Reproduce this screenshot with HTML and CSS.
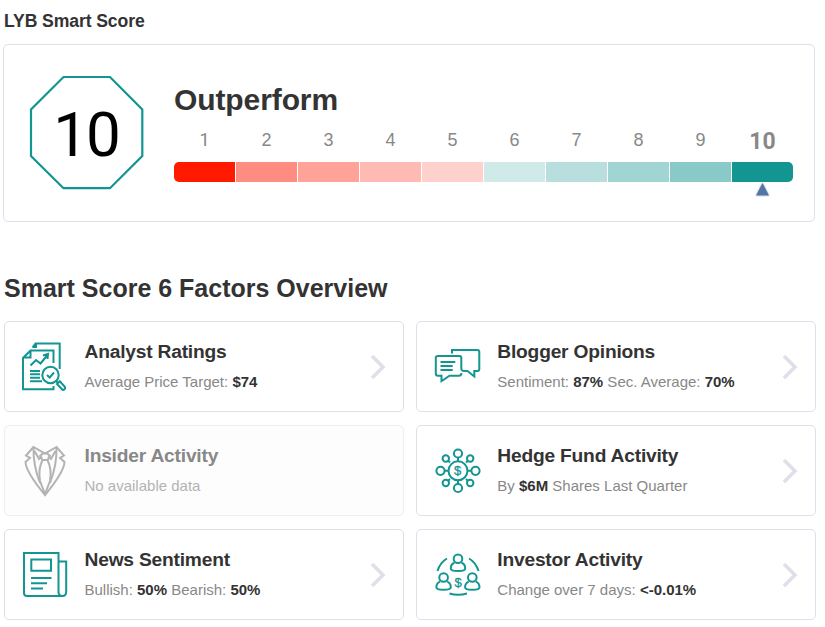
FILE: index.html
```html
<!DOCTYPE html>
<html lang="en">
<head>
  <meta charset="UTF-8">
  <meta name="viewport" content="width=device-width, initial-scale=1.0">
  <title>LYB Smart Score</title>
  <link rel="stylesheet" href="styles.css">
</head>
<body>
  <h3 class="page-title">LYB Smart Score</h3>

  <!-- Score -->
  <section class="score-card">
    <svg class="octagon" viewBox="0 0 116 116" width="116" height="116">
      <path d="M35.500 2H82L114.300 34.500V81L82 113.200H35.500L3 81V34.500Z" />
      <text x="58" y="80.500" text-anchor="middle">10</text>
    </svg>
    <div class="score-info">
      <h1>Outperform</h1>
      <div class="scale">
        <div class="step"><span class="one">1</span><i class="bar s1"></i></div>
        <div class="step"><span>2</span><i class="bar s2"></i></div>
        <div class="step"><span>3</span><i class="bar s3"></i></div>
        <div class="step"><span>4</span><i class="bar s4"></i></div>
        <div class="step"><span>5</span><i class="bar s5"></i></div>
        <div class="step"><span>6</span><i class="bar s6"></i></div>
        <div class="step"><span>7</span><i class="bar s7"></i></div>
        <div class="step"><span>8</span><i class="bar s8"></i></div>
        <div class="step"><span>9</span><i class="bar s9"></i></div>
        <div class="step active"><span>10</span><i class="bar s10"></i>
          <svg class="pointer" viewBox="0 0 15 13" width="15" height="13"><path d="M7.500 0L14 12.500H1Z" /></svg>
        </div>
      </div>
    </div>
  </section>

  <!-- Factors -->
  <h2 class="factors-title">Smart Score 6 Factors Overview</h2>
  <section class="factors">
    <div class="factor">
      <svg class="icon" viewBox="0 0 60 64">
        <path d="M18.500 12.500L21.500 8.500H45.700V34M18.500 12H22V8.500" />
        <path d="M39.500 28V15.500H16.500L9 23V54.200H39.500V51M9.500 22.500H16.500V15.500" />
        <path d="M16.500 30.500L22 25L26.500 28.500L33.500 20M29 20.500L34 19L33.500 24" />
        <path d="M16 36H26M16 39.300H26M16 42.700H26M16 46.300H28" />
        <circle cx="36.500" cy="40" r="8.200" />
        <path d="M33 40L35.700 42.500L40 37.500M42 46L44 48M43 49L45.800 46.300L51 52Q51.500 54 49.500 55L48.500 54.800Z" />
      </svg>
      <div class="text">
        <h4>Analyst Ratings</h4>
        <p>Average Price Target: <b>$74</b></p>
      </div>
      <svg class="chevron" viewBox="0 0 16 26"><path d="M2 2L13 13L2 24" /></svg>
    </div>

    <div class="factor">
      <svg class="icon" viewBox="-2 0 60 64">
        <path d="M33.300 38V39Q33 40.700 31 40.700H21.500L13.500 46.200V40.700H10Q7.800 40.700 7.800 38.500V23Q7.800 21 9.800 21H31.500Q33.300 21 33.300 23V33.500Q33.500 36 36 36H39.500L46.300 41.500V36H49.500Q51.300 36 51.300 34V17Q51.300 15 49.300 15H24V18.500" />
        <path d="M12.500 27H27.300M12.500 31H24.700M12.500 35H24.700" />
      </svg>
      <div class="text">
        <h4>Blogger Opinions</h4>
        <p>Sentiment: <b>87%</b> Sec. Average: <b>70%</b></p>
      </div>
      <svg class="chevron" viewBox="0 0 16 26"><path d="M2 2L13 13L2 24" /></svg>
    </div>

    <div class="factor disabled">
      <svg class="icon" viewBox="0 1 60 64">
        <path d="M19.500 9L12 17.500L16 20L11.500 24Q12 34 31 57Q50 34 50.500 24L46 20L50 17.500L42.500 9L31 15.500Z" />
        <path d="M19.500 9Q19 27 26 45M42.500 9Q43 27 36 45M20.500 13L25 21L28 18.500M41.500 13L37 21L34 18.500M26 18Q31 12 36 18L33.500 22H28.500Z" />
        <path d="M28.500 22Q24 31 26 43M33.500 22Q38 31 36 43M26 43L31 56L36 43" />
      </svg>
      <div class="text">
        <h4>Insider Activity</h4>
        <p>No available data</p>
      </div>
    </div>

    <div class="factor">
      <svg class="icon" viewBox="-2 1 60 64">
        <circle cx="30" cy="32.800" r="9.500" />
        <circle cx="30" cy="15.500" r="4.100" /><circle cx="30" cy="50" r="4.100" />
        <circle cx="12.500" cy="32.800" r="4.100" /><circle cx="47.500" cy="32.800" r="4.100" />
        <circle cx="17.800" cy="20.500" r="3.200" /><circle cx="42.200" cy="20.500" r="3.200" />
        <circle cx="17.800" cy="45" r="3.200" /><circle cx="42.200" cy="45" r="3.200" />
        <path d="M30 20V23M30 42V46M17 32.800H20M39.500 32.800H43M20.500 23L22 24.500M39.500 23L38 24.500M20.500 42.500L22 41M39.500 42.500L38 41" />
        <text x="29.500" y="37.300" text-anchor="middle">$</text>
      </svg>
      <div class="text">
        <h4>Hedge Fund Activity</h4>
        <p>By <b>$6M</b> Shares Last Quarter</p>
      </div>
      <svg class="chevron" viewBox="0 0 16 26"><path d="M2 2L13 13L2 24" /></svg>
    </div>

    <div class="factor">
      <svg class="icon" viewBox="0 -1 60 64">
        <path d="M48 52H13Q10 52 10 49V9H44.500V48Q44.500 52 48.300 52T52.200 48V17.500H44.500" />
        <path d="M17.300 15.500H37V26.700H17.300ZM17 34H37.500M17 39.300H33M17 44.500H29" />
      </svg>
      <div class="text">
        <h4>News Sentiment</h4>
        <p>Bullish: <b>50%</b> Bearish: <b>50%</b></p>
      </div>
      <svg class="chevron" viewBox="0 0 16 26"><path d="M2 2L13 13L2 24" /></svg>
    </div>

    <div class="factor">
      <svg class="icon" viewBox="-2 -1 60 64">
        <circle cx="30" cy="14.700" r="4.300" /><circle cx="15.600" cy="33.500" r="4.300" /><circle cx="44.300" cy="33.500" r="4.300" />
        <path d="M26.500 18.800Q22.800 20 22.800 24.500Q22.800 27 30 27T37.200 24.500Q37.200 20 33.500 18.800" />
        <path d="M12.100 37.600Q8.400 39 8.400 43.300Q8.400 45.800 15.600 45.800T22.800 43.300Q22.800 39 19.100 37.600" />
        <path d="M40.800 37.600Q37.100 39 37.100 43.300Q37.100 45.800 44.300 45.800T51.500 43.300Q51.500 39 47.800 37.600" />
        <path d="M9.500 27Q12 18.500 19 14.500M41 14.500Q48 18.500 50.500 27M21.500 49.500Q30 52.200 39 49.500" />
        <text x="30" y="42.500" text-anchor="middle">$</text>
      </svg>
      <div class="text">
        <h4>Investor Activity</h4>
        <p>Change over 7 days: <b>&lt;-0.01%</b></p>
      </div>
      <svg class="chevron" viewBox="0 0 16 26"><path d="M2 2L13 13L2 24" /></svg>
    </div>
  </section>
</body>
</html>
```
FILE: styles.css
```css
body {
  font-family: "Liberation Sans", Arial, sans-serif;
  margin: 0;
  padding: 10px 9px 0 4px;
  color: #333;
  background: #fff;
}

h1, h2, h3, h4, p {
  margin: 0;
}

.page-title {
  font-size: 17.600px;
  line-height: 22px;
  letter-spacing: -0.100px;
}

.score-card {
  box-sizing: border-box;
  width: 812px;
  height: 178px;
  margin: 12px 0 0 -1px;
  padding: 30px 0 0 24px;
  border: 1px solid #dfdfea;
  border-radius: 5px;
  display: flex;
  gap: 30px;
}

.octagon path {
  fill: none;
  stroke: #139592;
  stroke-width: 2.200;
}

.octagon text {
  font-family: Roboto, sans-serif;
  font-size: 62px;
  letter-spacing: -2px;
}

.score-info h1 {
  font-size: 30px;
  line-height: 34px;
  margin-top: 8px;
  letter-spacing: -0.100px;
}

.scale {
  display: flex;
  gap: 1px;
  margin-top: 13px;
}

.step {
  width: 61px;
  display: flex;
  flex-direction: column;
  align-items: center;
  color: #888;
  font-size: 18px;
}

.step span {
  height: 32px;
  line-height: 20px;
}

.step .one {
  font-family: Roboto, sans-serif;
}

.active span {
  font-family: Roboto, sans-serif;
  font-size: 23px;
  font-weight: bold;
  line-height: 23px;
}

.bar {
  width: 61px;
  height: 20px;
}

.s1 {
  background: #ff1a00;
  border-radius: 5px 0 0 5px;
}

.s2 { background: #ff8c80; }
.s3 { background: #ffa399; }
.s4 { background: #ffbab3; }
.s5 { background: #ffd1cc; }
.s6 { background: #d0eae9; }
.s7 { background: #b8dfde; }
.s8 { background: #a1d5d3; }
.s9 { background: #89cac8; }

.s10 {
  background: #139592;
  border-radius: 0 5px 5px 0;
}

.pointer {
  margin-top: 1px;
  fill: #5374a4;
  filter: drop-shadow(0 0 1px #9ab0d0);
}

.factors-title {
  font-size: 25px;
  line-height: 30px;
  margin-top: 51px;
}

.factors {
  display: grid;
  grid-template-columns: 400px 400px;
  grid-auto-rows: 91px;
  gap: 13px 12px;
  margin-top: 18px;
}

.factor {
  box-sizing: border-box;
  border: 1px solid #dfdfea;
  border-radius: 5px;
  padding: 0 17px 0 9px;
  display: flex;
  align-items: center;
}

.icon {
  width: 60px;
  height: 64px;
  fill: none;
  stroke: #139592;
  stroke-width: 2;
}

.icon text {
  fill: #139592;
  stroke-width: 0.300;
  font-size: 13px;
}

.text {
  flex: 1;
  margin-left: 10.500px;
}

.factor:nth-child(even) .text {
  margin-left: 11.300px;
}

.text h4 {
  font-size: 19.200px;
  line-height: 24px;
  letter-spacing: -0.200px;
  margin-top: -2px;
}

.text p {
  font-size: 15px;
  line-height: 20px;
  margin-top: 8px;
  color: #888;
}

.text b {
  color: #333;
}

.chevron {
  width: 16px;
  height: 26px;
  fill: none;
  stroke: #dfdfea;
  stroke-width: 3.500;
}

.disabled {
  background: #fdfdfd;
  border-color: #eeeef2;
}

.disabled .icon {
  stroke: #b3b3b3;
}

.disabled h4 {
  color: #888;
}

.disabled p {
  color: #b3b3b3;
}
```
